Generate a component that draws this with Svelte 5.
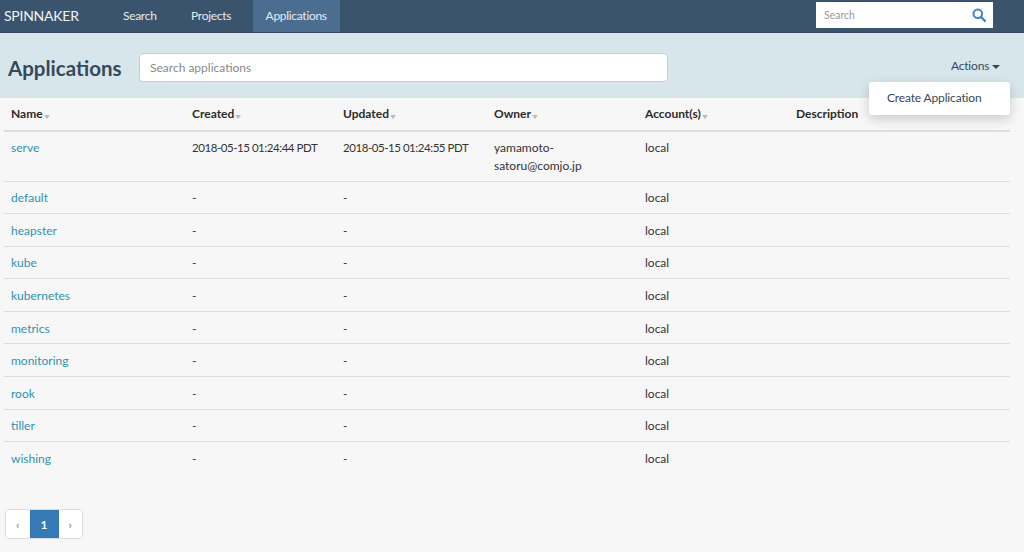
<script>
  const apps = ['default', 'heapster', 'kube', 'kubernetes', 'metrics', 'monitoring', 'rook', 'tiller', 'wishing'];
  const columns = [
    { label: 'Name', sort: true },
    { label: 'Created', sort: true },
    { label: 'Updated', sort: true },
    { label: 'Owner', sort: true },
    { label: 'Account(s)', sort: true },
    { label: 'Description', sort: false },
  ];
</script>

<header class="topbar">
  <span class="brand">SPINNAKER</span>
  <nav class="nav">
    <a class="nav-link">Search</a>
    <a class="nav-link">Projects</a>
    <a class="nav-link active">Applications</a>
  </nav>
  <div class="global-search">
    <span class="placeholder">Search</span>
    <svg width="14" height="14" viewBox="0 0 14 14" fill="none" stroke="#3d85c6" stroke-width="2">
      <circle cx="5.8" cy="5.8" r="4.3" />
      <path d="M9 9l4 4" stroke-linecap="round" stroke-width="2.4" />
    </svg>
  </div>
</header>

<section class="band">
  <h1>Applications</h1>
  <div class="app-search">Search applications</div>
  <div class="actions">
    <span class="actions-toggle">Actions <i class="caret"></i></span>
    <div class="menu">Create Application</div>
  </div>
</section>

<main class="content">
  <table>
    <colgroup>
      <col style="width:181px" /><col style="width:151px" /><col style="width:151px" />
      <col style="width:151px" /><col style="width:151px" /><col />
    </colgroup>
    <thead>
      <tr>
        {#each columns as col}
          <th>{col.label}{#if col.sort}<i class="sort"></i>{/if}</th>
        {/each}
      </tr>
    </thead>
    <tbody>
      <tr class="tall">
        <td><a class="app-link">serve</a></td>
        <td class="date">2018-05-15 01:24:44 PDT</td>
        <td class="date">2018-05-15 01:24:55 PDT</td>
        <td>yamamoto-<br />satoru@comjo.jp</td>
        <td>local</td>
        <td></td>
      </tr>
      {#each apps as app}
        <tr>
          <td><a class="app-link">{app}</a></td>
          <td>-</td>
          <td>-</td>
          <td></td>
          <td>local</td>
          <td></td>
        </tr>
      {/each}
    </tbody>
  </table>

  <div class="pagination">
    <span class="page">‹</span>
    <span class="page current">1</span>
    <span class="page">›</span>
  </div>
</main>

<style>
  :global(body) {
    margin: 0;
    background: #f7f7f7;
    font-family: Lato, "Noto Sans", sans-serif;
    font-size: 12px;
    color: #2f3a42;
    height: 552px;
    overflow: hidden;
  }

  .topbar {
    height: 33px;
    background: #3a546d;
    display: flex;
    align-items: stretch;
    box-sizing: border-box;
    padding: 0 31px 0 4px;
    border-bottom: 1px solid #34495e;
  }

  .brand {
    width: 106px;
    color: #f2f5f7;
    font-size: 14px;
    line-height: 32px;
    letter-spacing: -0.25px;
  }

  .nav {
    display: flex;
    flex: 1;
  }

  .nav-link {
    color: #e6ebef;
    font-size: 12px;
    letter-spacing: -0.3px;
    line-height: 31px;
    padding: 0 13px;
    margin-right: 8.5px;
  }

  .nav-link.active {
    background: #4a6d90;
    margin-right: 0;
  }

  .global-search {
    width: 177px;
    height: 26px;
    margin-top: 2px;
    background: #fff;
    display: flex;
    align-items: center;
    justify-content: space-between;
    padding: 0 7px 0 8px;
    box-sizing: border-box;
  }

  .placeholder {
    color: #999;
    font-size: 10.5px;
  }

  .band {
    height: 65px;
    background: #d6e6eb;
    display: flex;
    align-items: center;
    padding: 4px 24px 0 8px;
    box-sizing: border-box;
  }

  h1 {
    margin: 0;
    width: 131px;
    font-size: 20.5px;
    font-weight: 700;
    color: #36495c;
    white-space: nowrap;
  }

  .app-search {
    width: 529px;
    height: 29px;
    box-sizing: border-box;
    background: #fff;
    border: 1px solid #ccc;
    border-radius: 4px;
    padding: 0 10px;
    line-height: 27px;
    color: #8a8a8a;
    font-size: 12px;
  }

  .actions {
    margin-left: auto;
    margin-bottom: 4px;
    position: relative;
  }

  .actions-toggle {
    font-size: 12px;
    letter-spacing: -0.2px;
    color: #36495c;
  }

  .caret {
    display: inline-block;
    vertical-align: middle;
    border-top: 4px solid #36495c;
    border-left: 4px solid transparent;
    border-right: 4px solid transparent;
  }

  .menu {
    position: absolute;
    top: 24px;
    right: -10px;
    width: 141px;
    height: 33px;
    box-sizing: border-box;
    background: #fff;
    border-radius: 3px;
    padding-left: 18px;
    line-height: 32px;
    font-size: 12px;
    letter-spacing: -0.15px;
    white-space: nowrap;
    color: #36495c;
    box-shadow: 0 4px 12px rgba(0, 0, 0, 0.18);
    z-index: 2;
  }

  .content {
    padding: 0 14px 0 4px;
  }

  table {
    width: 1006px;
    border-collapse: collapse;
    table-layout: fixed;
  }

  th {
    height: 33px;
    box-sizing: border-box;
    padding: 0 7px 1px;
    text-align: left;
    font-size: 12px;
    font-weight: 700;
    color: #2b2b2b;
    border-bottom: 2px solid #ddd;
  }

  .sort {
    display: inline-block;
    vertical-align: -1px;
    margin-left: 1px;
    border-top: 4px solid #bbb;
    border-left: 3px solid transparent;
    border-right: 3px solid transparent;
  }

  td {
    height: 32.6px;
    box-sizing: border-box;
    padding: 2px 7px 0;
    font-size: 12px;
    line-height: 20px;
    color: #333;
    border-bottom: 1px solid #ddd;
  }

  tr:last-child td {
    border-bottom: none;
  }

  .tall td {
    height: 50px;
    vertical-align: top;
    padding-top: 7px;
    line-height: 18px;
  }

  .tall td.date {
    font-size: 11.5px;
    letter-spacing: -0.45px;
    white-space: nowrap;
  }

  .app-link {
    color: #2f93ad;
  }

  .pagination {
    display: flex;
    box-sizing: border-box;
    width: 78px;
    height: 30px;
    margin: 35px 0 0 1px;
    background: #fff;
    border: 1px solid #ddd;
    border-radius: 4px;
  }

  .page {
    flex: 1;
    display: flex;
    align-items: center;
    justify-content: center;
    color: #777;
    font-size: 12px;
  }

  .page.current {
    flex: 0 0 29px;
    background: #337ab7;
    color: #fff;
    font-weight: 700;
  }
</style>
